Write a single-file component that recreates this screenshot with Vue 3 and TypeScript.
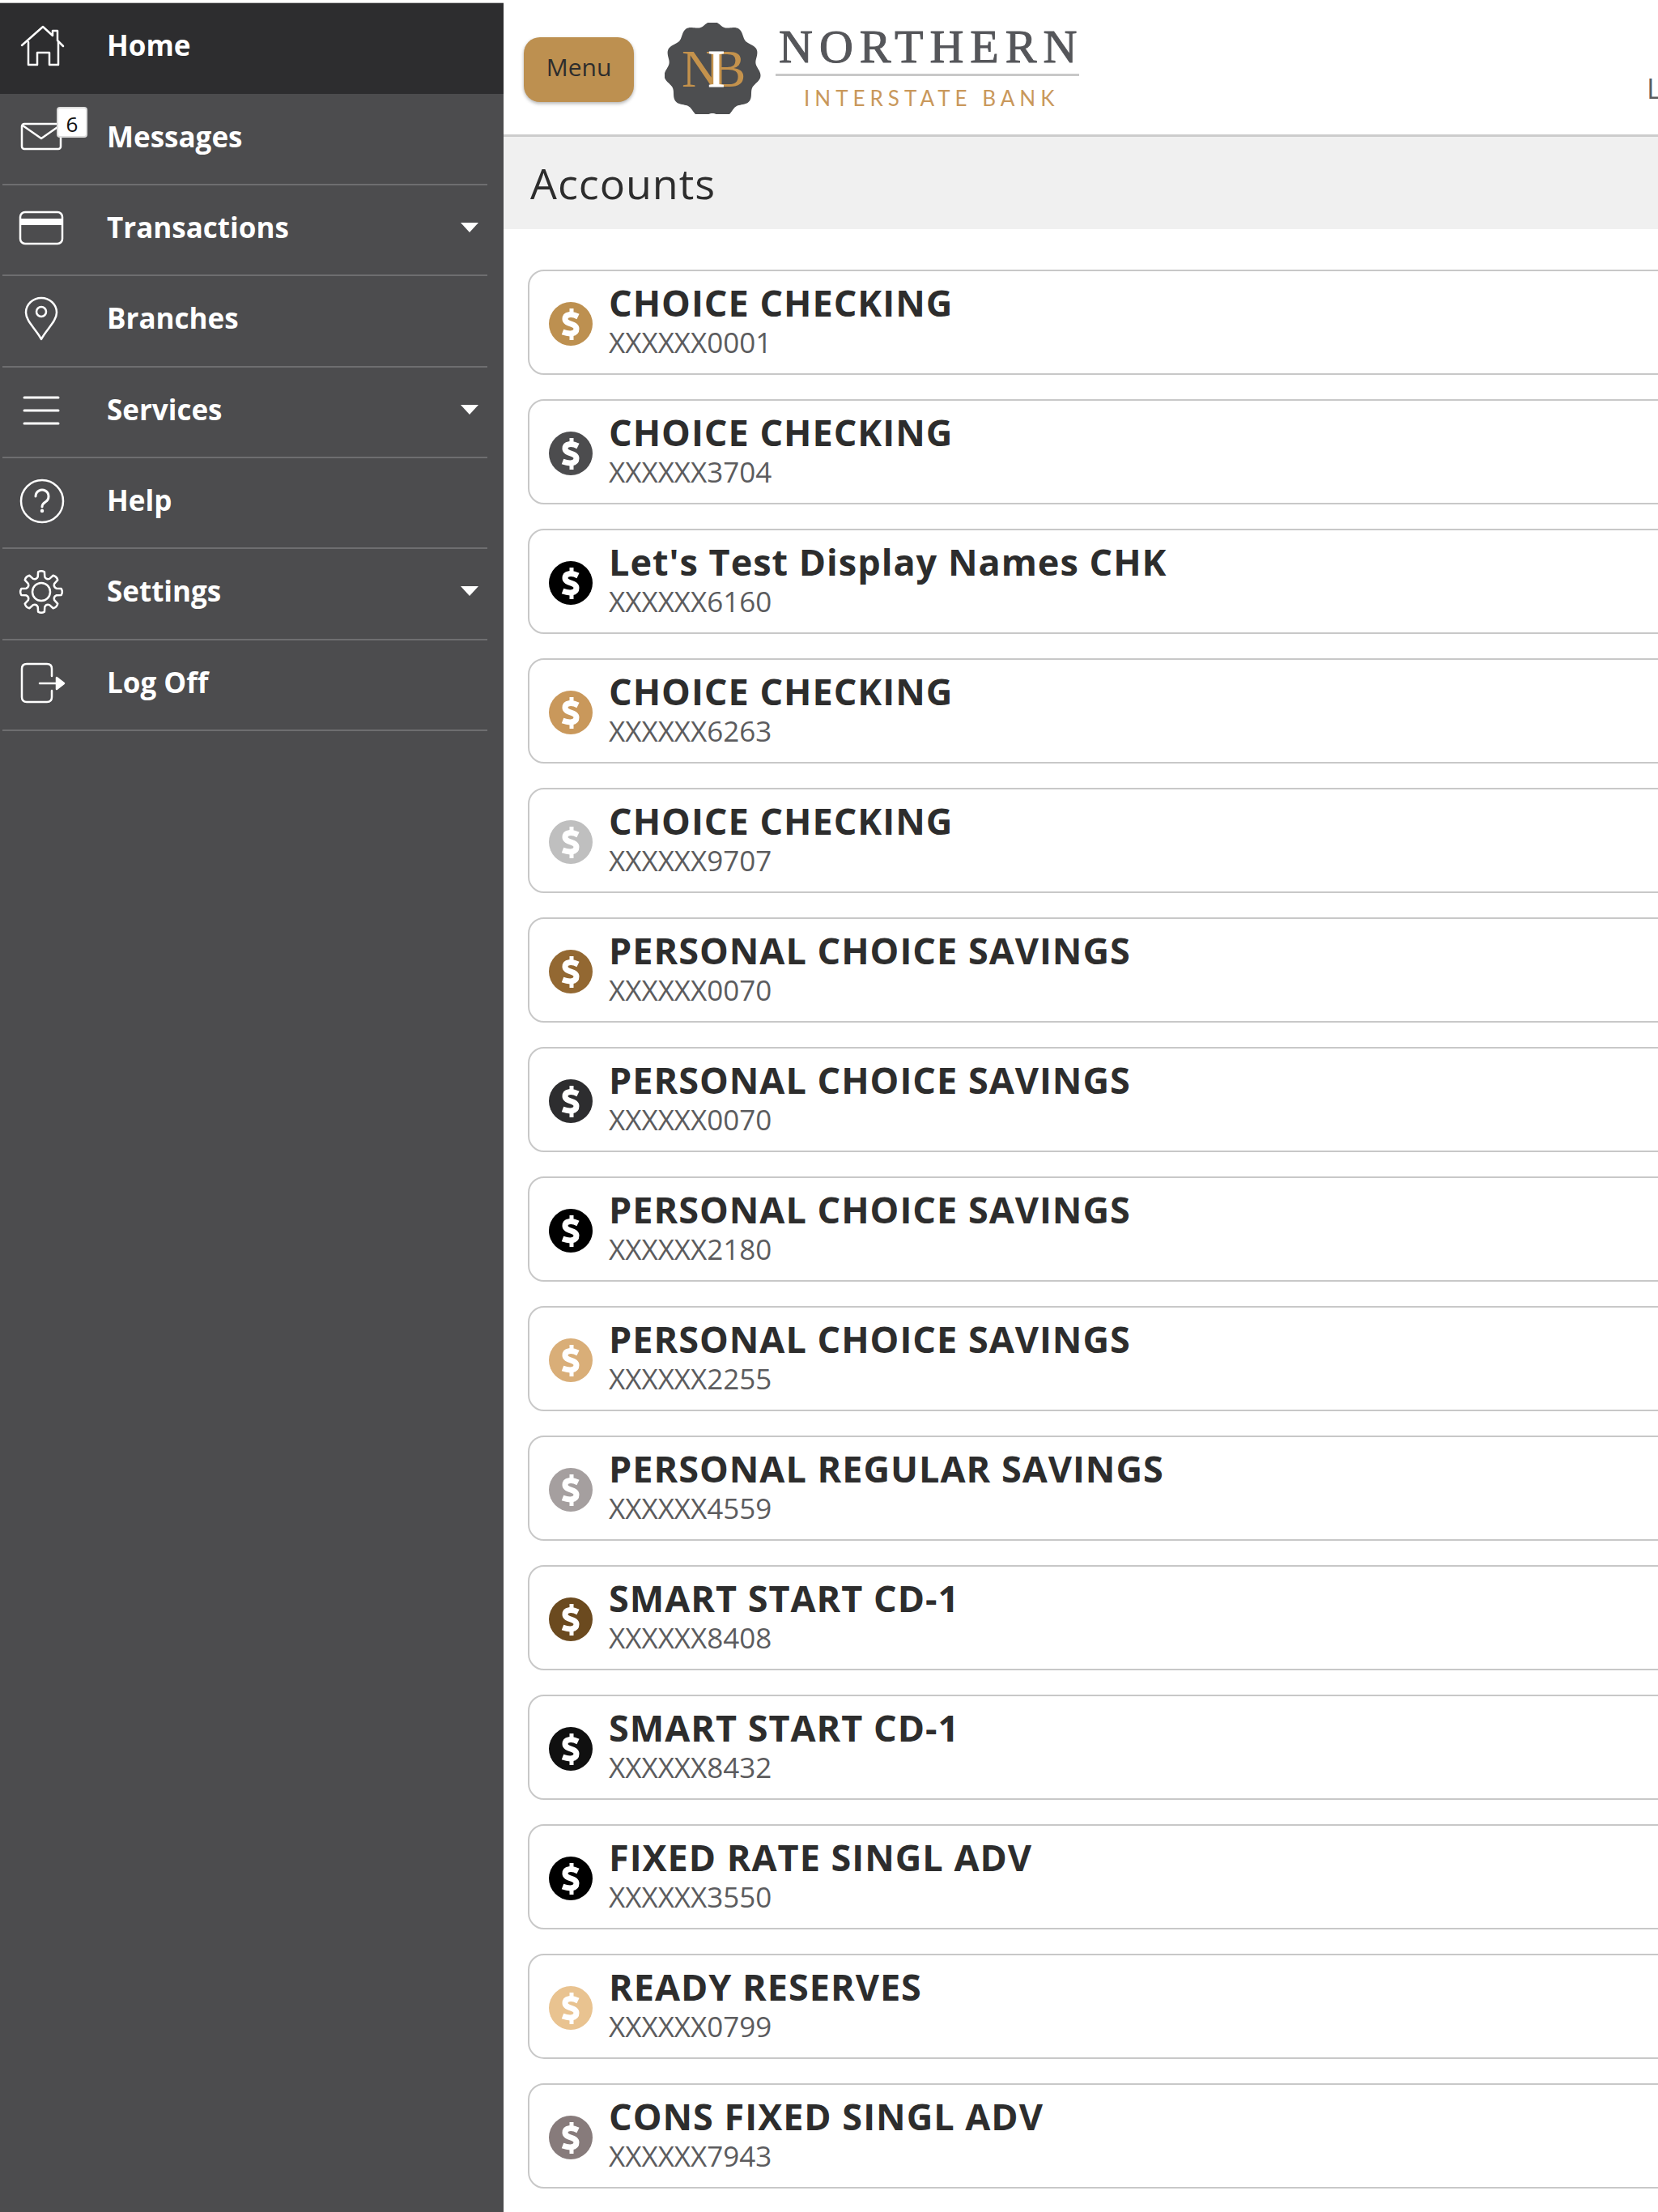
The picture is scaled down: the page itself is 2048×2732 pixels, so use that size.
<script setup lang="ts">
interface NavItem {
  label: string
  icon: string
  expandable?: boolean
  active?: boolean
  badge?: number
}

interface Account {
  name: string
  number: string
  color: string
}

const nav: NavItem[] = [
  { label: 'Home', icon: 'home', active: true },
  { label: 'Messages', icon: 'mail', badge: 6 },
  { label: 'Transactions', icon: 'card', expandable: true },
  { label: 'Branches', icon: 'pin' },
  { label: 'Services', icon: 'lines', expandable: true },
  { label: 'Help', icon: 'help' },
  { label: 'Settings', icon: 'gear', expandable: true },
  { label: 'Log Off', icon: 'exit' },
]

const accounts: Account[] = [
  { name: 'CHOICE CHECKING', number: 'XXXXXX0001', color: '#bd9050' },
  { name: 'CHOICE CHECKING', number: 'XXXXXX3704', color: '#4c4c4e' },
  { name: "Let's Test Display Names CHK", number: 'XXXXXX6160', color: '#000000' },
  { name: 'CHOICE CHECKING', number: 'XXXXXX6263', color: '#c9985b' },
  { name: 'CHOICE CHECKING', number: 'XXXXXX9707', color: '#bfbfbf' },
  { name: 'PERSONAL CHOICE SAVINGS', number: 'XXXXXX0070', color: '#936832' },
  { name: 'PERSONAL CHOICE SAVINGS', number: 'XXXXXX0070', color: '#2d2d2f' },
  { name: 'PERSONAL CHOICE SAVINGS', number: 'XXXXXX2180', color: '#000000' },
  { name: 'PERSONAL CHOICE SAVINGS', number: 'XXXXXX2255', color: '#d9ae78' },
  { name: 'PERSONAL REGULAR SAVINGS', number: 'XXXXXX4559', color: '#a59f9f' },
  { name: 'SMART START CD-1', number: 'XXXXXX8408', color: '#6b4a1f' },
  { name: 'SMART START CD-1', number: 'XXXXXX8432', color: '#101010' },
  { name: 'FIXED RATE SINGL ADV', number: 'XXXXXX3550', color: '#000000' },
  { name: 'READY RESERVES', number: 'XXXXXX0799', color: '#e9c390' },
  { name: 'CONS FIXED SINGL ADV', number: 'XXXXXX7943', color: '#877b7b' },
]

// Scalloped seal with eleven lobes, the first one pointing up.
const seal = Array.from({ length: 264 }, (_, i) => {
  const a = (i / 264) * Math.PI * 2
  const r = 57 + 3 * Math.cos(11 * a)
  return `${(59 + r * Math.sin(a)).toFixed(2)},${(58 - r * Math.cos(a)).toFixed(2)}`
}).join(' ')

// Gear outline: eight tapered teeth around a ring.
const gear = Array.from({ length: 8 }, (_, i) => {
  const at = (r: number, deg: number) => {
    const a = ((i * 45 + deg) * Math.PI) / 180
    return `${(27 + r * Math.sin(a)).toFixed(2)} ${(27 - r * Math.cos(a)).toFixed(2)}`
  }
  return `${i ? 'L' : 'M'}${at(19, -13)} L${at(25, -9)} Q${at(27, 0)} ${at(25, 9)} L${at(19, 13)} Q${at(16, 22.5)} ${at(19, 32)}`
}).join(' ') + 'Z'
</script>

<template>
  <div class="shell">
    <nav class="sidebar" aria-label="Main">
      <ul class="nav-list">
        <li v-for="item in nav" :key="item.label" class="nav-row" :class="{ active: item.active }">
          <component
            :is="item.expandable ? 'button' : 'a'"
            class="nav-item"
            :href="item.expandable ? undefined : '#'"
            :type="item.expandable ? 'button' : undefined"
          >
            <span class="nav-icon">
              <svg viewBox="0 0 54 54" width="54" height="54" aria-hidden="true">
                <template v-if="item.icon === 'home'">
                  <path d="M3 27 29 4 41 15V9h6v12l7 7" />
                  <path d="M11 23v28h11V36h15v15h11V23" />
                </template>
                <template v-else-if="item.icon === 'mail'">
                  <rect x="3" y="11" width="48" height="31" rx="3" />
                  <path d="M4 13 27 29 50 13" />
                </template>
                <template v-else-if="item.icon === 'card'">
                  <rect x="1" y="8" width="52" height="39" rx="6" />
                  <path d="M1 20h52" class="band" />
                </template>
                <template v-else-if="item.icon === 'pin'">
                  <path d="M27 53C21 41 8 31 8 20a19 18 0 0 1 38 0c0 11-13 21-19 33z" />
                  <circle cx="27" cy="19" r="6" />
                </template>
                <template v-else-if="item.icon === 'lines'">
                  <path d="M6 12h42M6 28h42M6 44h42" class="thick" />
                </template>
                <template v-else-if="item.icon === 'help'">
                  <circle cx="28" cy="28" r="26" />
                  <path d="M20 22a8 8 0 1 1 12 7c-3 2-4 3-4 6" class="mark" />
                  <circle cx="28" cy="40" r="1" />
                </template>
                <template v-else-if="item.icon === 'gear'">
                  <path :d="gear" transform="translate(0 1)" />
                  <circle cx="27" cy="28" r="11" />
                </template>
                <template v-else>
                  <path d="M40 19V10q0-6-6-6H9Q3 4 3 10v35q0 6 6 6h25q6 0 6-6v-8" />
                  <path d="M25 28h20" />
                  <path d="M46 21l9 7-9 7z" class="solid" />
                </template>
              </svg>
              <span v-if="item.badge" class="badge">{{ item.badge }}</span>
            </span>
            <span class="nav-label">{{ item.label }}</span>
            <svg v-if="item.expandable" class="caret" viewBox="0 0 22 12" width="22" height="12" aria-hidden="true">
              <path d="M0 0h22L11 12z" />
            </svg>
          </component>
        </li>
      </ul>
    </nav>

    <main class="page">
      <header class="topbar">
        <button type="button" class="menu-button">Menu</button>
        <svg class="logo" viewBox="0 0 520 113" width="520" height="113" role="img" aria-label="Northern Interstate Bank">
          <polygon :points="seal" fill="#4d4e50" />
          <g class="monogram">
            <text x="21" y="79" fill="#c4924c">N</text>
            <text x="57" y="79" fill="#c4924c">B</text>
            <text x="53" y="79" fill="#ffffff" stroke="#ffffff">I</text>
          </g>
          <text x="141" y="49" class="wordmark">NORTHERN</text>
          <rect x="137" y="63" width="375" height="3" fill="#c8c8c8" />
          <text x="172" y="103" class="tagline">INTERSTATE BANK</text>
        </svg>
        <span class="login">L</span>
      </header>
      <div class="section-head"><h1>Accounts</h1></div>
      <ul class="accounts">
        <li v-for="(account, i) in accounts" :key="i" class="account">
          <svg class="coin" viewBox="0 0 54 54" width="54" height="54" aria-hidden="true">
            <circle cx="27" cy="27" r="27" :fill="account.color" />
            <g fill="none" stroke="#fff">
              <path d="M36 18C28 14 20 15 20 21C20 28 34 26 34 33C34 40 25 40 17 37" stroke-width="7" />
              <path d="M28 8v8M28 38v9" stroke-width="5" />
            </g>
          </svg>
          <div class="account-text">
            <h2>{{ account.name }}</h2>
            <p>{{ account.number }}</p>
          </div>
        </li>
      </ul>
    </main>
  </div>
</template>

<style>
body {
  margin: 0;
  background: #fff;
}
</style>

<style scoped>
.shell {
  display: flex;
  min-height: 100vh;
  overflow: hidden;
  font-family: 'Open Sans', 'Noto Sans', sans-serif;
  color: #2d2d2d;
}

h1,
h2,
p,
ul {
  margin: 0;
  padding: 0;
}

ul {
  list-style: none;
}

.sidebar {
  flex: 0 0 622px;
  margin-top: 3px;
  border-top: 1px solid #b8b8b8;
  background: #4c4c4e;
}

.nav-list {
  display: grid;
  grid-template-rows: repeat(8, 1fr);
  height: 899px;
}

.nav-row {
  display: flex;
  padding: 0 20px 0 3px;
}

.nav-row.active {
  background: #2d2d2f;
}

.nav-item {
  display: flex;
  flex: 1;
  align-items: center;
  padding: 0 11px 6px 21px;
  border: 0;
  border-bottom: 2px solid #6e6e70;
  background: none;
  color: #fff;
  font: bold 35px/48px 'Open Sans', 'Noto Sans', sans-serif;
  text-align: left;
  text-decoration: none;
}

.nav-row.active .nav-item {
  border-bottom-color: transparent;
}

.nav-icon {
  position: relative;
  display: flex;
  width: 108px;
}

.nav-icon svg {
  overflow: visible;
  fill: none;
  stroke: #fff;
  stroke-width: 2.5;
  stroke-linecap: round;
  stroke-linejoin: round;
}

.nav-icon .band {
  stroke-width: 8;
  stroke-linecap: butt;
}

.nav-icon .thick,
.nav-icon .mark {
  stroke-width: 3;
}

.nav-icon .solid {
  fill: #fff;
}

.badge {
  position: absolute;
  top: -10px;
  left: 46px;
  box-sizing: border-box;
  width: 38px;
  height: 38px;
  border: 2px solid #ddd;
  border-radius: 4px;
  background: #fff;
  color: #111;
  font: 26px/38px 'Open Sans', 'Noto Sans', sans-serif;
  text-align: center;
}

.nav-label {
  flex: 1;
}

.caret {
  fill: #fff;
}

.page {
  flex: 0 0 100%;
}

.topbar {
  display: flex;
  box-sizing: border-box;
  width: calc(100vw - 622px);
  height: 166px;
  padding-left: 25px;
}

.menu-button {
  width: 136px;
  height: 80px;
  margin-top: 46px;
  padding: 0 0 6px;
  border: 0;
  border-radius: 20px;
  background: #bd9050;
  box-shadow: 0 2px 4px rgba(0, 0, 0, 0.3);
  color: #2d2d2d;
  font: 30px/40px 'Open Sans', 'Noto Sans', sans-serif;
}

.logo {
  flex: none;
  margin: 28px 0 0 38px;
}

.monogram {
  font: 65px 'Liberation Serif', serif;
}

.wordmark {
  fill: #55565a;
  stroke: #55565a;
  font: 58px 'Liberation Serif', serif;
  letter-spacing: 8px;
}

.tagline {
  fill: #c9985b;
  font: 26px Lato, sans-serif;
  letter-spacing: 6px;
}

.login {
  width: 14px;
  margin: 86px 0 0 auto;
  overflow: hidden;
  color: #5c5c5e;
  font-size: 35px;
  line-height: 46px;
}

.section-head {
  padding: 25px 33px;
  border-top: 3px solid #ccc;
  background: #f0f0f0;
}

.section-head h1 {
  font-size: 52px;
  font-weight: 400;
  line-height: 64px;
  letter-spacing: 1px;
}

.accounts {
  display: grid;
  gap: 30px;
  padding: 50px 30px 30px;
}

.account {
  display: flex;
  box-sizing: border-box;
  height: 130px;
  border: 2px solid #c8c8c8;
  border-radius: 20px;
  padding: 14px 24px;
}

.coin {
  flex: none;
  margin: 24px 20px 0 0;
}

.account h2 {
  font-size: 45px;
  font-weight: 700;
  line-height: 50px;
  letter-spacing: 1px;
}

.account p {
  color: #5c5c5e;
  font-size: 35px;
  line-height: 48px;
}
</style>
